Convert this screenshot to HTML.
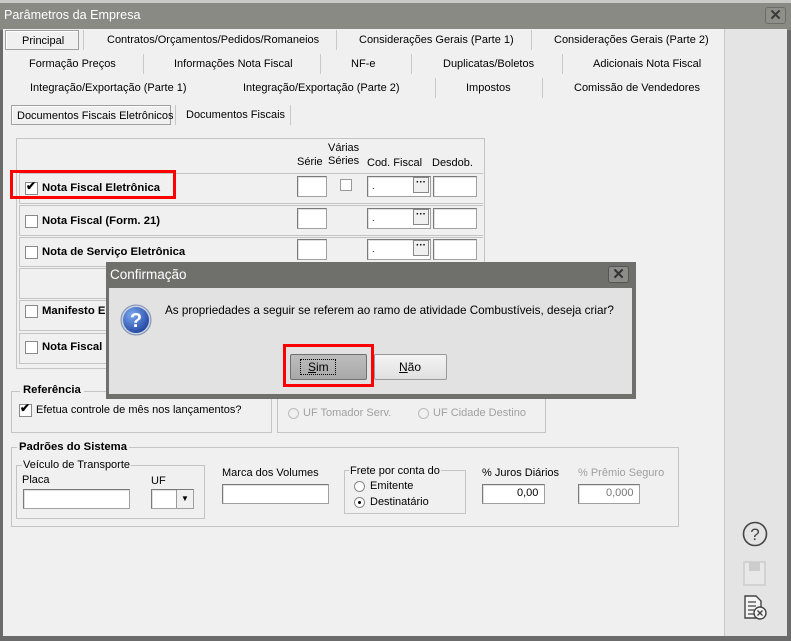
<!DOCTYPE html>
<html><head><meta charset="utf-8"><style>
*{box-sizing:border-box;margin:0;padding:0}
body{width:791px;height:641px;overflow:hidden;background:#6b6b6b;font-family:"Liberation Sans",sans-serif;font-size:11px;color:#000;position:relative}
.a{position:absolute}
.t{position:absolute;white-space:nowrap}
.b{font-weight:bold;font-size:11.3px}
.inp{position:absolute;background:#fff;border:1px solid #a0a0a0;border-top-color:#7a7a7a;border-left-color:#7a7a7a;box-shadow:inset 1px 1px 0 #e0e0e0}
.cb{position:absolute;width:13px;height:13px;background:#fff;border:1px solid #8a8a8a}
.grp{position:absolute;border:1px solid #c4c4c4}
.row{position:absolute;left:19px;width:464px;border:1px solid #c4c4c4;border-right:none}
.sep{position:absolute;width:1px;background:#c8c8c8}
.dots{position:absolute;width:16px;height:16px;border:1px solid #888;background:#f0f0f0;font-size:10px;font-weight:bold;text-align:center;line-height:10px}
</style></head><body>
<div class="a" style="left:0;top:0;width:791px;height:30px;background:#8a8a85"></div>
<div class="a" style="left:0;top:0;width:791px;height:3px;background:#c9c9c5"></div>
<div class="t" style="left:4px;top:8px;font-size:12.6px;color:#fff">Parâmetros da Empresa</div>
<div class="a" style="left:765px;top:7px;width:21px;height:17px;border:1px solid #6c6c68;border-radius:3px;background:#8f8f8a;color:#3a3a3a;font-weight:bold;font-size:15px;text-align:center;line-height:15px">✕</div>
<div class="a" style="left:3px;top:29px;width:721px;height:607px;background:#f0f0f0"></div>
<div class="a" style="left:724px;top:29px;width:63px;height:607px;background:#e4e4e4;border-left:1px solid #c8c8c8"></div>
<div class="a" style="left:5px;top:30px;width:74px;height:20px;border:1px solid #a0a0a0;background:#f0f0f0;box-shadow:inset 1px 1px 0 #fff"></div>
<div class="t" style="left:22px;top:35px">Principal</div>
<div class="sep" style="left:83px;top:30px;height:20px"></div>
<div class="t" style="left:107px;top:34px">Contratos/Orçamentos/Pedidos/Romaneios</div>
<div class="sep" style="left:336px;top:30px;height:20px"></div>
<div class="t" style="left:359px;top:34px">Considerações Gerais (Parte 1)</div>
<div class="sep" style="left:531px;top:30px;height:20px"></div>
<div class="t" style="left:554px;top:34px">Considerações Gerais (Parte 2)</div>
<div class="t" style="left:29px;top:58px">Formação Preços</div>
<div class="sep" style="left:143px;top:54px;height:20px"></div>
<div class="t" style="left:174px;top:58px">Informações Nota Fiscal</div>
<div class="sep" style="left:320px;top:54px;height:20px"></div>
<div class="t" style="left:351px;top:58px">NF-e</div>
<div class="sep" style="left:411px;top:54px;height:20px"></div>
<div class="t" style="left:443px;top:58px">Duplicatas/Boletos</div>
<div class="sep" style="left:562px;top:54px;height:20px"></div>
<div class="t" style="left:593px;top:58px">Adicionais Nota Fiscal</div>
<div class="t" style="left:30px;top:82px">Integração/Exportação (Parte 1)</div>
<div class="t" style="left:243px;top:82px">Integração/Exportação (Parte 2)</div>
<div class="sep" style="left:435px;top:78px;height:20px"></div>
<div class="t" style="left:466px;top:82px">Impostos</div>
<div class="sep" style="left:542px;top:78px;height:20px"></div>
<div class="t" style="left:574px;top:82px">Comissão de Vendedores</div>
<div class="a" style="left:11px;top:105px;width:160px;height:20px;border:1px solid #a0a0a0;box-shadow:inset 1px 1px 0 #fff"></div>
<div class="t" style="left:17px;top:110px">Documentos Fiscais Eletrônicos</div>
<div class="sep" style="left:175px;top:105px;height:20px"></div>
<div class="t" style="left:186px;top:109px">Documentos Fiscais</div>
<div class="sep" style="left:290px;top:105px;height:20px"></div>
<div class="grp" style="left:16px;top:138px;width:469px;height:231px"></div>
<div class="t" style="left:297px;top:156px">Série</div>
<div class="t" style="left:328px;top:142px">Várias</div>
<div class="t" style="left:328px;top:155px">Séries</div>
<div class="t" style="left:367px;top:157px">Cod. Fiscal</div>
<div class="t" style="left:432px;top:157px">Desdob.</div>
<div class="row" style="top:173px;height:31px"></div>
<div class="row" style="top:205px;height:31px"></div>
<div class="row" style="top:237px;height:30px"></div>
<div class="row" style="top:268px;height:31px"></div>
<div class="row" style="top:300px;height:31px"></div>
<div class="row" style="top:333px;height:31px"></div>
<div class="cb" style="left:25px;top:182px"></div><div class="t" style="left:26px;top:179px;font-size:12px;font-weight:bold">✔</div>
<div class="t b" style="left:42px;top:182px">Nota Fiscal Eletrônica</div>
<div class="a" style="left:10px;top:170px;width:166px;height:29px;border:3px solid #f00"></div>
<div class="cb" style="left:25px;top:215px"></div><div class="t b" style="left:42px;top:215px">Nota Fiscal (Form. 21)</div>
<div class="cb" style="left:25px;top:246px"></div><div class="t b" style="left:42px;top:246px">Nota de Serviço Eletrônica</div>
<div class="cb" style="left:25px;top:305px"></div><div class="t b" style="left:42px;top:305px">Manifesto E</div>
<div class="cb" style="left:25px;top:341px"></div><div class="t b" style="left:42px;top:341px">Nota Fiscal</div>
<div class="inp" style="left:297px;top:176px;width:30px;height:21px"></div>
<div class="cb" style="left:340px;top:179px;width:12px;height:12px;border-color:#999"></div>
<div class="inp" style="left:367px;top:176px;width:64px;height:21px"></div><div class="t" style="left:372px;top:181px;font-size:9px">.</div><div class="dots" style="left:413px;top:177px">···</div>
<div class="inp" style="left:433px;top:176px;width:44px;height:21px"></div>
<div class="inp" style="left:297px;top:208px;width:30px;height:21px"></div>
<div class="inp" style="left:367px;top:208px;width:64px;height:21px"></div><div class="t" style="left:372px;top:213px;font-size:9px">.</div><div class="dots" style="left:413px;top:209px">···</div>
<div class="inp" style="left:433px;top:208px;width:44px;height:21px"></div>
<div class="inp" style="left:297px;top:239px;width:30px;height:21px"></div>
<div class="inp" style="left:367px;top:239px;width:64px;height:21px"></div><div class="t" style="left:372px;top:244px;font-size:9px">.</div><div class="dots" style="left:413px;top:240px">···</div>
<div class="inp" style="left:433px;top:239px;width:44px;height:21px"></div>
<div class="grp" style="left:11px;top:391px;width:261px;height:42px"></div>
<div class="t b" style="left:20px;top:384px;background:#f0f0f0;padding:0 3px">Referência</div>
<div class="cb" style="left:19px;top:404px"></div><div class="t" style="left:20px;top:401px;font-weight:bold;font-size:12px">✔</div>
<div class="t" style="left:36px;top:404px">Efetua controle de mês nos lançamentos?</div>
<div class="grp" style="left:277px;top:391px;width:269px;height:42px"></div>
<div class="a" style="left:288px;top:408px;width:11px;height:11px;border-radius:50%;border:1px solid #bbb"></div>
<div class="t" style="left:303px;top:407px;color:#a0a0a0">UF Tomador Serv.</div>
<div class="a" style="left:418px;top:408px;width:11px;height:11px;border-radius:50%;border:1px solid #bbb"></div>
<div class="t" style="left:433px;top:407px;color:#a0a0a0">UF Cidade Destino</div>
<div class="grp" style="left:11px;top:447px;width:668px;height:80px"></div>
<div class="t b" style="left:17px;top:441px;background:#f0f0f0;padding:0 2px">Padrões do Sistema</div>
<div class="grp" style="left:16px;top:465px;width:189px;height:54px"></div>
<div class="t" style="left:22px;top:459px;background:#f0f0f0;padding:0 1px">Veículo de Transporte</div>
<div class="t" style="left:22px;top:474px">Placa</div>
<div class="inp" style="left:23px;top:489px;width:107px;height:20px"></div>
<div class="t" style="left:151px;top:475px">UF</div>
<div class="inp" style="left:151px;top:489px;width:43px;height:20px"></div>
<div class="a" style="left:176px;top:490px;width:17px;height:18px;background:#f0f0f0;border-left:1px solid #999;text-align:center;font-size:8px;line-height:18px">▼</div>
<div class="t" style="left:222px;top:467px">Marca dos Volumes</div>
<div class="inp" style="left:222px;top:484px;width:107px;height:20px"></div>
<div class="grp" style="left:344px;top:470px;width:122px;height:44px"></div>
<div class="t" style="left:349px;top:465px;background:#f0f0f0;padding:0 1px">Frete por conta do</div>
<div class="a" style="left:354px;top:481px;width:11px;height:11px;border-radius:50%;border:1px solid #888;background:#fff"></div>
<div class="t" style="left:370px;top:480px">Emitente</div>
<div class="a" style="left:354px;top:497px;width:11px;height:11px;border-radius:50%;border:1px solid #888;background:#fff"></div>
<div class="a" style="left:358px;top:501px;width:3px;height:3px;border-radius:50%;background:#000"></div>
<div class="t" style="left:370px;top:496px">Destinatário</div>
<div class="t" style="left:482px;top:467px">% Juros Diários</div>
<div class="inp" style="left:482px;top:484px;width:63px;height:20px"></div>
<div class="t" style="left:517px;top:487px">0,00</div>
<div class="t" style="left:578px;top:467px;color:#a0a0a0">% Prêmio Seguro</div>
<div class="inp" style="left:578px;top:484px;width:62px;height:20px"></div>
<div class="t" style="left:606px;top:487px;color:#777">0,000</div>
<svg class="a" style="left:740px;top:520px" width="30" height="110" viewBox="0 0 30 110">
<circle cx="15" cy="14" r="11.5" fill="none" stroke="#444" stroke-width="1.6"/>
<text x="15" y="20" text-anchor="middle" font-family="Liberation Sans" font-size="17" fill="#444">?</text>
<rect x="4" y="42" width="21" height="23" fill="#e8e8e8" stroke="#ccc" stroke-width="1.5"/>
<rect x="9" y="42" width="11" height="9" fill="#ccc"/>
<path d="M5 76h11l5 5v17H5z" fill="#f4f4f4" stroke="#444" stroke-width="1.4"/>
<path d="M8 82h8M8 86h8M8 90h6M8 94h6" stroke="#444" stroke-width="1.2"/>
<circle cx="20" cy="93" r="6" fill="#f4f4f4" stroke="#444" stroke-width="1.4"/>
<path d="M17.5 90.5l5 5M22.5 90.5l-5 5" stroke="#444" stroke-width="1.4"/>
</svg>
<div class="a" style="left:106px;top:262px;width:530px;height:137px;background:#6f6f6b"></div>
<div class="t" style="left:110px;top:267px;font-size:13.5px;color:#fff">Confirmação</div>
<div class="a" style="left:608px;top:266px;width:21px;height:17px;border:1px solid #555;border-radius:3px;background:#8c8c88;color:#333;font-weight:bold;font-size:15px;text-align:center;line-height:15px">✕</div>
<div class="a" style="left:109px;top:288px;width:523px;height:106px;background:#e2e2e2"></div>
<svg class="a" style="left:120px;top:304px" width="32" height="32" viewBox="0 0 32 32">
<defs><radialGradient id="g" cx="0.35" cy="0.3" r="0.8"><stop offset="0" stop-color="#7aa8f0"/><stop offset="1" stop-color="#1c3f9c"/></radialGradient></defs>
<circle cx="16" cy="16" r="15" fill="#c8d0e0" stroke="#8090b0"/>
<circle cx="16" cy="16" r="13" fill="url(#g)"/>
<text x="16" y="23" text-anchor="middle" font-family="Liberation Sans" font-weight="bold" font-size="20" fill="#fff">?</text>
</svg>
<div class="t" style="left:165px;top:304px;font-size:11.7px">As propriedades a seguir se referem ao ramo de atividade Combustíveis, deseja criar?</div>
<div class="a" style="left:283px;top:344px;width:91px;height:43px;border:3px solid #f00"></div>
<div class="a" style="left:290px;top:354px;width:77px;height:26px;border:1px solid #707070;border-radius:2px;background:linear-gradient(#bdbdbd,#a8a8a8)"></div>
<div class="a" style="left:300px;top:359px;width:36px;height:16px;border:1px dotted #000"></div>
<div class="t" style="left:308px;top:360px;font-size:12px"><u>S</u>im</div>
<div class="a" style="left:374px;top:354px;width:73px;height:26px;border:1px solid #999;border-radius:2px;background:linear-gradient(#f4f4f4,#e0e0e0)"></div>
<div class="t" style="left:399px;top:360px;font-size:12px"><u>N</u>ão</div>
</body></html>
